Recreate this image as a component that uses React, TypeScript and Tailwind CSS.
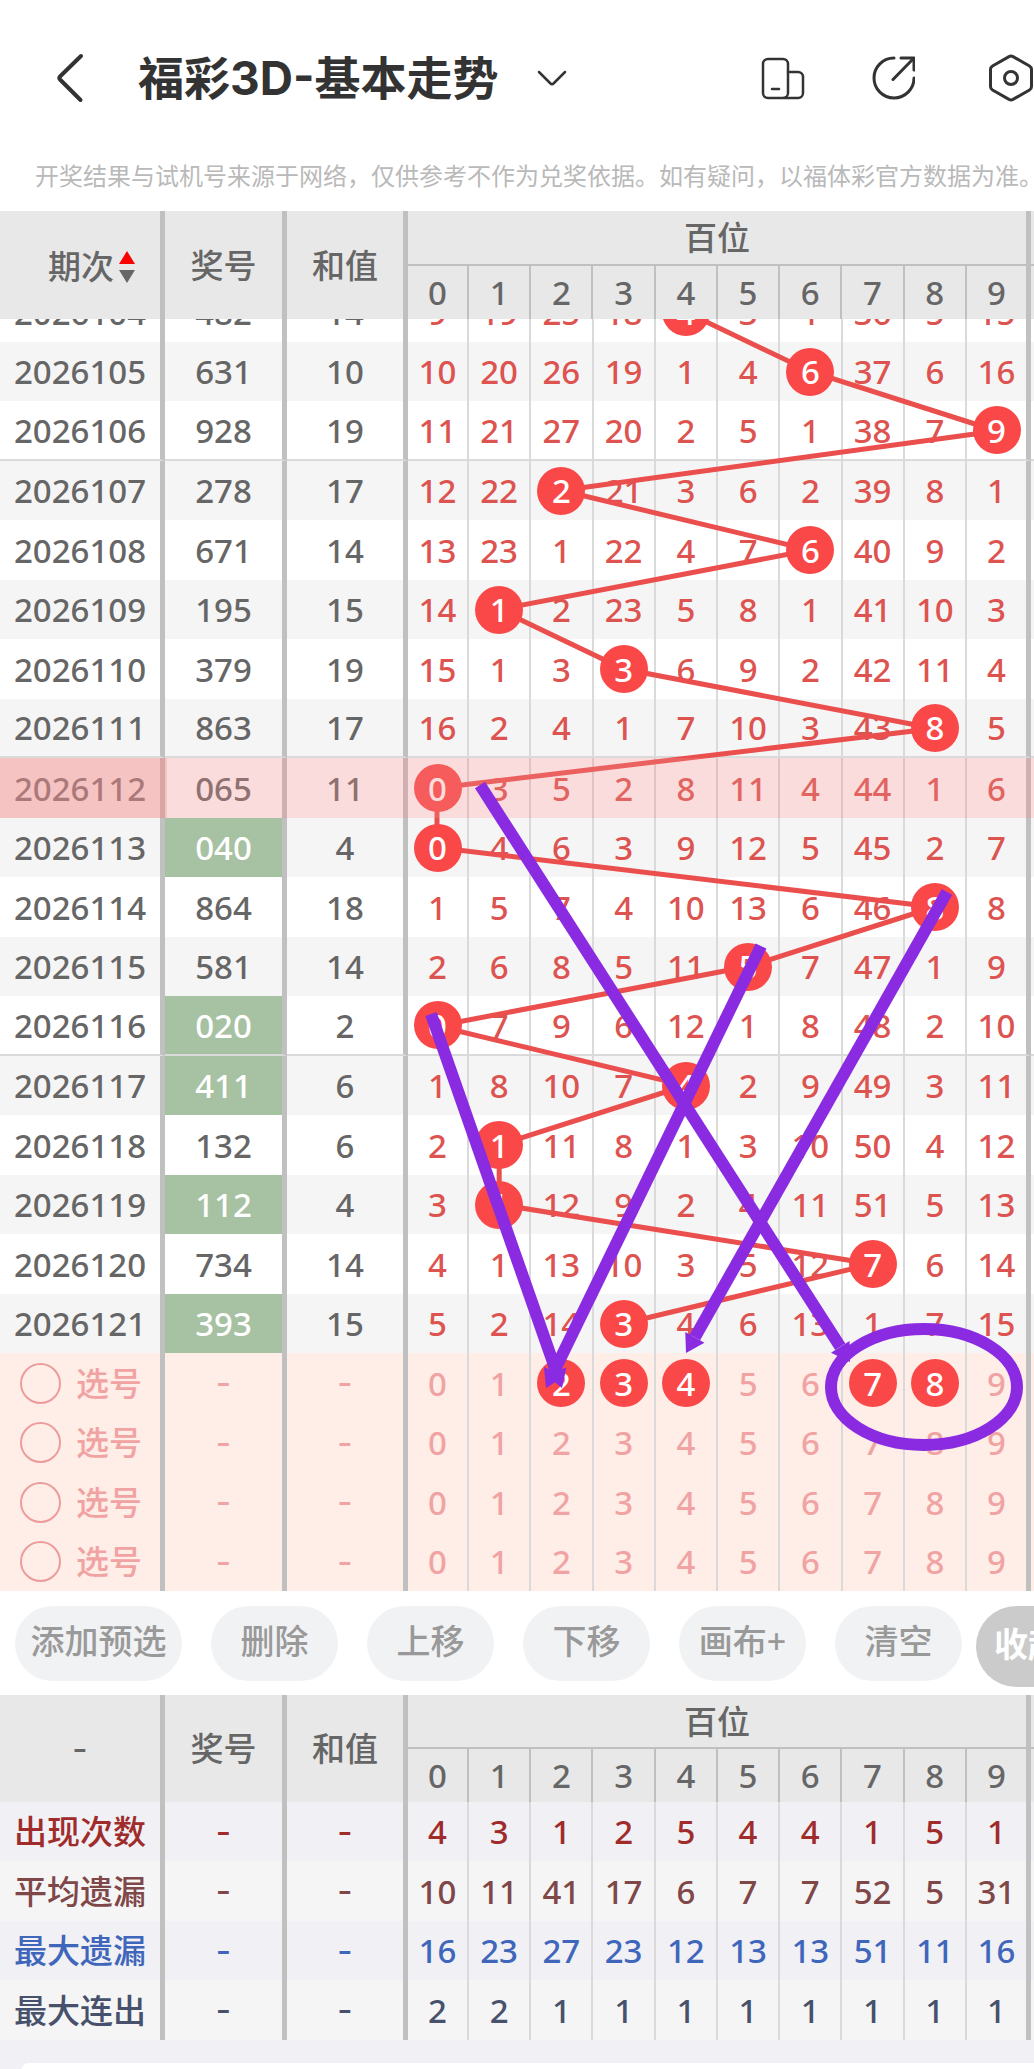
import { useState } from "react";

type Draw = { issue: string; award: string; sum: number; cells: number[]; hit: number };

const draws: Draw[] = [
  { issue: "2026104", award: "482", sum: 14, hit: 4, cells: [9, 19, 25, 18, 4, 3, 1, 36, 5, 15] },
  { issue: "2026105", award: "631", sum: 10, hit: 6, cells: [10, 20, 26, 19, 1, 4, 6, 37, 6, 16] },
  { issue: "2026106", award: "928", sum: 19, hit: 9, cells: [11, 21, 27, 20, 2, 5, 1, 38, 7, 9] },
  { issue: "2026107", award: "278", sum: 17, hit: 2, cells: [12, 22, 2, 21, 3, 6, 2, 39, 8, 1] },
  { issue: "2026108", award: "671", sum: 14, hit: 6, cells: [13, 23, 1, 22, 4, 7, 6, 40, 9, 2] },
  { issue: "2026109", award: "195", sum: 15, hit: 1, cells: [14, 1, 2, 23, 5, 8, 1, 41, 10, 3] },
  { issue: "2026110", award: "379", sum: 19, hit: 3, cells: [15, 1, 3, 3, 6, 9, 2, 42, 11, 4] },
  { issue: "2026111", award: "863", sum: 17, hit: 8, cells: [16, 2, 4, 1, 7, 10, 3, 43, 8, 5] },
  { issue: "2026112", award: "065", sum: 11, hit: 0, cells: [0, 3, 5, 2, 8, 11, 4, 44, 1, 6] },
  { issue: "2026113", award: "040", sum: 4, hit: 0, cells: [0, 4, 6, 3, 9, 12, 5, 45, 2, 7] },
  { issue: "2026114", award: "864", sum: 18, hit: 8, cells: [1, 5, 7, 4, 10, 13, 6, 46, 8, 8] },
  { issue: "2026115", award: "581", sum: 14, hit: 5, cells: [2, 6, 8, 5, 11, 5, 7, 47, 1, 9] },
  { issue: "2026116", award: "020", sum: 2, hit: 0, cells: [0, 7, 9, 6, 12, 1, 8, 48, 2, 10] },
  { issue: "2026117", award: "411", sum: 6, hit: 4, cells: [1, 8, 10, 7, 4, 2, 9, 49, 3, 11] },
  { issue: "2026118", award: "132", sum: 6, hit: 1, cells: [2, 1, 11, 8, 1, 3, 10, 50, 4, 12] },
  { issue: "2026119", award: "112", sum: 4, hit: 1, cells: [3, 1, 12, 9, 2, 4, 11, 51, 5, 13] },
  { issue: "2026120", award: "734", sum: 14, hit: 7, cells: [4, 1, 13, 10, 3, 5, 12, 7, 6, 14] },
  { issue: "2026121", award: "393", sum: 15, hit: 3, cells: [5, 2, 14, 3, 4, 6, 13, 1, 7, 15] },
];

const stats = [
  { label: "出现次数", tone: "bg-[#f0f0f5] text-[#9f2b2b]", values: [4, 3, 1, 2, 5, 4, 4, 1, 5, 1] },
  { label: "平均遗漏", tone: "bg-[#f5f5f5] text-[#7f4747]", values: [10, 11, 41, 17, 6, 7, 7, 52, 5, 31] },
  { label: "最大遗漏", tone: "bg-[#f0f0f5] text-[#3f66ba]", values: [16, 23, 27, 23, 12, 13, 13, 51, 11, 16] },
  { label: "最大连出", tone: "bg-[#f5f5f5] text-[#47516c]", values: [2, 2, 1, 1, 1, 1, 1, 1, 1, 1] },
];

const digits = [0, 1, 2, 3, 4, 5, 6, 7, 8, 9];
const selectedIssue = "2026112";
const tableClass =
  "w-full table-fixed border-separate border-spacing-0 text-center text-[33px] leading-none font-medium";
const thick = "border-r-[5px] border-[#c0c0c0] p-0 font-medium";

function digitBorder(d: number) {
  return d === 9 ? "border-r-[5px] border-r-[#c0c0c0] p-0" : "border-r-2 border-r-[#dadada] p-0";
}

function Columns() {
  return (
    <colgroup>
      <col className="w-[165px]" />
      <col className="w-[122px]" />
      <col className="w-[121px]" />
      <col className="w-[61px]" />
      {digits.slice(1, 9).map((d) => (
        <col key={d} />
      ))}
      <col className="w-[64px]" />
      <col className="w-[3px]" />
    </colgroup>
  );
}

function Dash() {
  return <span className="font-['Inter',sans-serif]">-</span>;
}

function Head({ sortable = false }: { sortable?: boolean }) {
  return (
    <thead className="bg-[#e8e8e8] text-[#666]">
      <tr className={sortable ? "h-[55px]" : "h-[54px]"}>
        <th rowSpan={2} className={thick}>
          {sortable ? (
            <button type="button" className="inline-flex items-center gap-1 pl-6 align-middle">
              期次
              <svg width="18" height="34" viewBox="0 0 18 34" aria-hidden="true">
                <path d="M9 1 L17 14 H1 Z" fill="#fb0000" />
                <path d="M9 33 L17 20 H1 Z" fill="#666" />
              </svg>
            </button>
          ) : (
            <Dash />
          )}
        </th>
        <th rowSpan={2} className={thick}>奖号</th>
        <th rowSpan={2} className={thick}>和值</th>
        <th colSpan={10} className="border-r-[5px] border-b-2 border-[#c0c0c0] p-0 font-medium">百位</th>
        <th className="border-b-2 border-[#c0c0c0] p-0" />
      </tr>
      <tr className="h-[53px]">
        {digits.map((d) => (
          <th
            key={d}
            className={
              d === 9
                ? "border-r-[5px] border-[#c0c0c0] p-0 font-medium"
                : "border-r-2 border-[#c0c0c0] p-0 font-medium"
            }
          >
            {d}
          </th>
        ))}
        <th className="p-0" />
      </tr>
    </thead>
  );
}

function DrawRow({ draw, index }: { draw: Draw; index: number }) {
  const ruled = Number(draw.issue) % 5 === 1 && draw.issue !== "2026121";
  const line = ruled ? " border-b-2 border-b-[#dadada]" : "";
  const paired = new Set(draw.award).size < 3;
  const selected = draw.issue === selectedIssue;
  return (
    <tr className={index % 2 ? "relative h-[59px] bg-[#f5f5f5]" : "relative h-[60px] bg-white"}>
      <th className={thick + line}>
        {draw.issue}
        {selected && (
          <>
            <span className="absolute inset-0 z-20 bg-[rgba(238,138,138,0.3)]" />
            <span className="absolute inset-y-0 left-0 z-20 w-[167px] bg-[rgba(238,138,138,0.3)]" />
          </>
        )}
      </th>
      <td className={thick + line + (paired ? " bg-[#a7c1a3] text-white" : "")}>{draw.award}</td>
      <td className={thick + line}>{draw.sum}</td>
      {draw.cells.map((value, d) => (
        <td key={d} className={digitBorder(d) + line + " text-[#dd5350]"}>
          {d === draw.hit ? <Ball value={value} /> : value}
        </td>
      ))}
      <td className={"p-0" + line} />
    </tr>
  );
}

function Ball({ value }: { value: number }) {
  return (
    <span className="relative z-10 mx-auto flex size-12 items-center justify-center rounded-full bg-[#fa4848] text-white">
      {value}
    </span>
  );
}

function PickRow({ row }: { row: number }) {
  const [picked, setPicked] = useState<number[]>(row === 0 ? [2, 3, 4, 7, 8] : []);
  const toggle = (d: number) =>
    setPicked((p) => (p.includes(d) ? p.filter((x) => x !== d) : [...p, d]));
  return (
    <tr className={row % 2 ? "h-[59px] bg-[#feeee7] text-[#f1a3a3]" : "h-[60px] bg-[#feeee7] text-[#f1a3a3]"}>
      <th className={thick}>
        <label className="flex items-center gap-[15px] pl-5">
          <input
            type="radio"
            name="pick"
            className="size-[41px] appearance-none rounded-full border-2 border-[#ec9c9c] checked:bg-[#f1a3a3]"
          />
          选号
        </label>
      </th>
      <td className={thick}><Dash /></td>
      <td className={thick}><Dash /></td>
      {digits.map((d) => (
        <td key={d} className={digitBorder(d)}>
          <button type="button" aria-pressed={picked.includes(d)} onClick={() => toggle(d)} className="w-full">
            {picked.includes(d) ? <Ball value={d} /> : d}
          </button>
        </td>
      ))}
      <td className="p-0" />
    </tr>
  );
}

function TrendLine() {
  const points = draws.map((r, i) => `${28 + 62.2 * r.hit},${-7 + 59.5 * i}`).join(" ");
  return (
    <svg
      className="pointer-events-none absolute top-0 right-[3px] bottom-0 left-[409px]"
      width="calc(100% - 412px)"
      height="100%"
      viewBox="0 0 622 1272"
      preserveAspectRatio="none"
      aria-hidden="true"
    >
      <polyline points={points} fill="none" stroke="#ea4f4d" strokeWidth="5" />
    </svg>
  );
}

const arrows = [
  [71, 466, 441, 1043],
  [538, 573, 277, 1034],
  [352, 627, 137, 1069],
  [22, 695, 153, 1069],
];

function Annotations() {
  return (
    <svg
      className="pointer-events-none absolute top-0 right-[3px] bottom-0 left-[409px] z-30"
      width="calc(100% - 412px)"
      height="100%"
      viewBox="0 0 622 1272"
      preserveAspectRatio="none"
      aria-hidden="true"
    >
      {arrows.map(([x1, y1, x2, y2]) => {
        const length = Math.hypot(x2 - x1, y2 - y1);
        const ux = (x2 - x1) / length;
        const uy = (y2 - y1) / length;
        const bx = x2 - ux * 18;
        const by = y2 - uy * 18;
        return (
          <g key={x1} fill="#8a2be2">
            <line x1={x1} y1={y1} x2={bx} y2={by} stroke="#8a2be2" strokeWidth="12" />
            <polygon
              points={`${x2},${y2} ${bx - uy * 11},${by + ux * 11} ${bx + uy * 11},${by - ux * 11}`}
            />
          </g>
        );
      })}
      <ellipse cx="515" cy="1068" rx="93" ry="58" fill="none" stroke="#8a2be2" strokeWidth="12" />
    </svg>
  );
}

function TopBar() {
  return (
    <header className="flex h-[108px] items-center pt-12 text-[#333]">
      <button type="button" aria-label="返回" className="ml-[54px]">
        <svg width="32" height="52" viewBox="0 0 32 52" fill="none" stroke="currentColor" strokeWidth="4" strokeLinecap="round" strokeLinejoin="round">
          <path d="M27 4 L6 24.500 Q4.500 26 6 27.500 L26.500 48" />
        </svg>
      </button>
      <h1 className="ml-[52px] font-['Inter','Noto_Sans_CJK_SC',sans-serif] text-[46px] leading-none font-bold whitespace-nowrap">
        福彩3D-基本走势
      </h1>
      <button type="button" aria-label="切换走势" className="ml-[38px]">
        <svg width="32" height="20" viewBox="0 0 32 20" fill="none" stroke="currentColor" strokeWidth="2.5" strokeLinecap="round" strokeLinejoin="round">
          <path d="M3 4 L14.500 15.500 Q16 17 17.500 15.500 L29 4" />
        </svg>
      </button>
      <button type="button" aria-label="横屏" className="mr-[66px] ml-auto">
        <svg width="44" height="44" viewBox="0 0 44 44" fill="none" stroke="currentColor" strokeWidth="2.5" strokeLinecap="round">
          <rect x="2" y="3" width="25" height="39" rx="5" />
          <path d="M27 16 H37 A5 5 0 0 1 42 21 V37 A5 5 0 0 1 37 42 H23" />
          <path d="M11 33 H18" />
        </svg>
      </button>
      <button type="button" aria-label="分享" className="mr-[74px]">
        <svg width="44" height="44" viewBox="0 0 44 44" fill="none" stroke="currentColor" strokeWidth="3" strokeLinecap="round" strokeLinejoin="round">
          <path d="M23 2 A20 20 0 1 0 43 22" />
          <path d="M30 2 H43 V14" />
          <path d="M22 23.500 L42 3" />
        </svg>
      </button>
      <button type="button" aria-label="设置" className="mr-[1px]">
        <svg width="44" height="48" viewBox="0 0 44 48" fill="none" stroke="currentColor" strokeWidth="3" strokeLinejoin="round">
          <path d="M20 2.600 Q22 1.600 24 2.600 L40.500 12 Q42.500 13.200 42.500 15.500 V32.500 Q42.500 34.800 40.500 36 L24 45.400 Q22 46.400 20 45.400 L3.500 36 Q1.500 34.800 1.500 32.500 V15.500 Q1.500 13.200 3.500 12 Z" />
          <circle cx="22" cy="24" r="6.500" />
        </svg>
      </button>
    </header>
  );
}

const actions = ["删除", "上移", "下移", "画布+", "清空"];

export default function App() {
  return (
    <div className="flex min-h-screen flex-col overflow-x-hidden bg-white font-['Noto_Sans','Noto_Sans_CJK_SC',sans-serif] text-[#666]">
      <TopBar />
      <p className="mt-[50px] mb-[17px] pl-[35px] text-[24px] leading-9 whitespace-nowrap text-[#b9b9b9]">
        开奖结果与试机号来源于网络，仅供参考不作为兑奖依据。如有疑问，以福体彩官方数据为准。
      </p>

      <table className={tableClass}>
        <Columns />
        <Head sortable />
      </table>
      <div className="relative isolate overflow-hidden">
        <table className={tableClass + " -mt-[37px]"}>
          <Columns />
          <tbody>
            {draws.map((draw, i) => (
              <DrawRow key={draw.issue} draw={draw} index={i} />
            ))}
            {[0, 1, 2, 3].map((row) => (
              <PickRow key={row} row={row} />
            ))}
          </tbody>
        </table>
        <TrendLine />
        <Annotations />
      </div>

      <div className="flex items-start gap-[29px] overflow-hidden pt-[15px] pb-2 pl-[15px] text-[34px] leading-none font-medium whitespace-nowrap text-[#999]">
        <button type="button" className="h-[75px] w-[167px] shrink-0 rounded-full bg-[#f1f2f4] pb-1.5">
          添加预选
        </button>
        {actions.map((label) => (
          <button key={label} type="button" className="h-[75px] w-[127px] shrink-0 rounded-full bg-[#f1f2f4] pb-1.5">
            {label}
          </button>
        ))}
        <button
          type="button"
          className="-ml-[15px] h-[81px] w-[104px] shrink-0 rounded-full bg-[#cbcbcb] pb-1.5 font-bold text-white"
        >
          收起
        </button>
      </div>

      <table className={tableClass}>
        <Columns />
        <Head />
        <tbody>
          {stats.map((stat, i) => (
            <tr key={stat.label} className={stat.tone + (i % 2 ? " h-[60px]" : " h-[59px]")}>
              <th className={thick}>{stat.label}</th>
              <td className={thick}><Dash /></td>
              <td className={thick}><Dash /></td>
              {stat.values.map((value, d) => (
                <td key={d} className={digitBorder(d)}>
                  {value}
                </td>
              ))}
              <td className="p-0" />
            </tr>
          ))}
        </tbody>
      </table>
      <div className="flex flex-1 flex-col bg-[#f0f0f5] pt-[23px] pl-[22px]">
        <div className="min-h-[6px] flex-1 rounded-tl-[22px] bg-white" />
      </div>
    </div>
  );
}
